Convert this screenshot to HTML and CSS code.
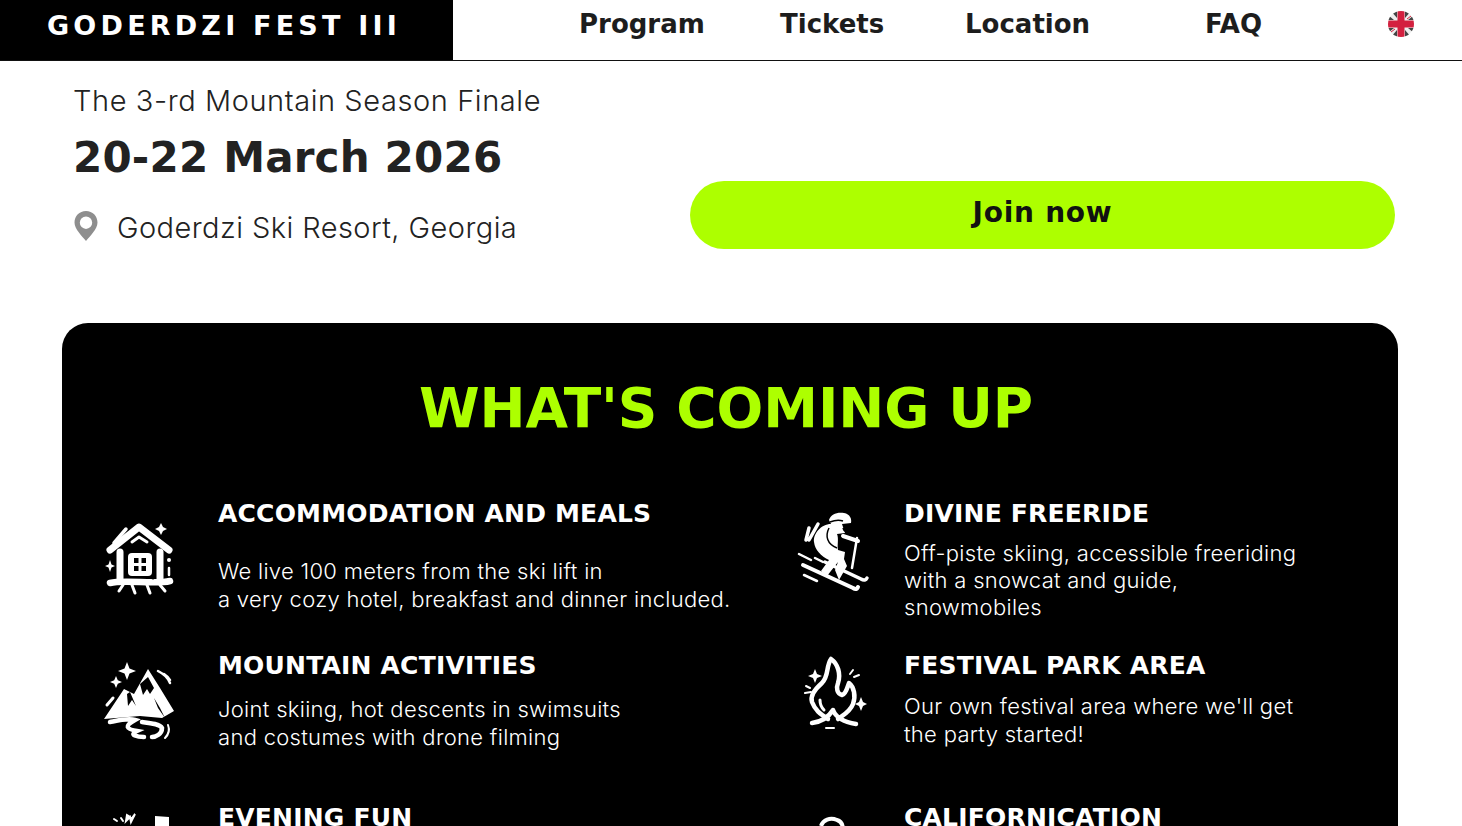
FILE: index.html
```html
<!DOCTYPE html>
<html lang="en">
<head>
<meta charset="utf-8">
<title>Goderdzi Fest III</title>
<link rel="stylesheet" href="styles.css">
</head>
<body>
<div class="page">
<header class="header">
  <a class="logo">GODERDZI FEST III</a>
  <nav class="nav">
    <a class="nav-link">Program</a>
    <a class="nav-link">Tickets</a>
    <a class="nav-link">Location</a>
    <a class="nav-link">FAQ</a>
    <svg class="flag" width="28" height="28" viewBox="0 0 28 28">
      <defs><clipPath id="fc"><circle cx="14" cy="14" r="13"/></clipPath></defs>
      <g clip-path="url(#fc)">
        <rect width="28" height="28" fill="#eee"/>
        <path d="M4 1h6v7zM24 1h-6v7zM4 27h6v-7zM24 27h-6v-7zM1 5l6 5H1zM27 5l-6 5h6zM1 23l6-5H1zM27 23l-6-5h6z" fill="#444"/>
        <path d="M4 22l4-3M20 9l4-3" stroke="#d8223f" stroke-width="1"/>
        <path d="M10.500 0h7v10.500H28v7H17.500V28h-7V17.500H0v-7h10.500z" fill="#d3203f"/>
      </g>
    </svg>
  </nav>
</header>

<section class="hero">
  <div class="hero-info">
    <p class="hero-sub">The 3-rd Mountain Season Finale</p>
    <h1 class="hero-date">20-22 March 2026</h1>
    <div class="hero-place">
      <svg class="pin" width="26" height="32" viewBox="0 0 26 32">
        <path fill-rule="evenodd" d="M13 1C6.400 1 1.500 6 1.500 12.500 1.500 19 9 26 13 31c4-5 11.500-12 11.500-18.500C24.500 6 19.600 1 13 1zm0 5.500a6.200 6.200 0 1 1 0 12.400 6.200 6.200 0 0 1 0-12.400z" fill="#8e8e8e"/>
      </svg>
      <span>Goderdzi Ski Resort, Georgia</span>
    </div>
  </div>
  <a class="join">Join now</a>
</section>

<section class="card">
  <h2 class="card-title">WHAT'S COMING UP</h2>
  <div class="features">

    <article class="feature">
      <svg class="icon" width="100" height="110" viewBox="0 0 100 110">
        <g fill="none" stroke="#fff" stroke-linecap="round" stroke-linejoin="round">
          <path d="M20 50 49 27 79 50" stroke-width="7"/>
          <path d="M42 42 49 37 57 42" stroke-width="3"/>
          <path d="M24 43 36 29" stroke-width="3.500"/>
          <path d="M30 52V80M70 52V80" stroke-width="7"/>
          <path d="M20 83C35 79 65 85 80 81" stroke-width="6.500"/>
          <path d="M29 91 33 85M45 93 42 85M60 93 57 85M75 91 70 85" stroke-width="3"/>
          <path d="M79 68V75" stroke-width="2.500"/>
        </g>
        <rect x="38" y="53" width="24" height="23" rx="4" fill="#fff"/>
        <path d="M44 58h4.500v5H44zM51.500 58H56v5h-4.500zM44 66h4.500v5H44zM51.500 66H56v5h-4.500z" fill="#000"/>
        <path d="M71 23l2 4 4 2-4 2-2 4-2-4-4-2 4-2zM20 60l1.500 4.500 3.500 1.500-3.500 1.500L20 72l-1.500-4.500-3.500-1.500 3.500-1.500z" fill="#fff"/>
        <circle cx="79" cy="60" r="2" fill="#fff"/>
        <circle cx="63" cy="78" r="1.500" fill="#000"/>
      </svg>
      <div class="feature-body">
        <h3 class="feature-title">ACCOMMODATION AND MEALS</h3>
        <p class="feature-text gap-large">We live 100 meters from the ski lift in<br>a very cozy hotel, breakfast and dinner included.</p>
      </div>
    </article>

    <article class="feature">
      <svg class="icon" width="100" height="110" viewBox="-9 0 100 110">
        <path d="M44 20C46 14 52 12 59 13 65 14 67 19 66 23L57 24 60 33 52 34C54 38 52 46 53 50L60 52 59 59 62 66 54 80 50 70 53 62 42 76 36 71 44 60C36 56 30 50 29 42 28 34 36 24 46 24Z" fill="#fff"/>
        <path d="M58 28C59 32 62 33 65 30M44 28C40 36 42 44 52 48M45 22C50 20 55 20 58 21" fill="none" stroke="#000" stroke-width="1.500"/>
        <g fill="none" stroke="#fff" stroke-linecap="round">
          <path d="M58 36 73 41" stroke-width="4"/>
          <path d="M72 38 67 68" stroke-width="2.500"/>
          <path d="M24 28 21 40M33 24 24 40" stroke-width="3.500"/>
          <path d="M18 65 68 88C71 90 72 89 73 87" stroke-width="4"/>
          <path d="M40 62 76 79C79 81 81 80 82 78" stroke-width="3.500"/>
          <path d="M14 54 26 60M30 58 38 62M19 75 32 81" stroke-width="2.500"/>
        </g>
      </svg>
      <div class="feature-body">
        <h3 class="feature-title">DIVINE FREERIDE</h3>
        <p class="feature-text gap-small tight">Off-piste skiing, accessible freeriding<br>with a snowcat and guide,<br>snowmobiles</p>
      </div>
    </article>

    <article class="feature">
      <svg class="icon" width="100" height="100" viewBox="0 2 100 100">
        <path d="M37 12l2.500 6.500 6.500 2.500-6.500 2.500L37 30l-2.500-6.500L28 21l6.500-2.500zM26 26l1.800 4.200L32 32l-4.200 1.800L26 38l-1.800-4.200L20 32l4.200-1.800z" fill="#fff"/>
        <path d="M58 19 70 38 84 61 72 68 50 66 14 69 34 39 44 44Z" fill="#fff"/>
        <path d="M50 34 53 45 57 39 60 44 64 38 58 27ZM37 44 38 56 42 50 46 56 40 42ZM64 48 68 58 75 68 70 58Z" fill="#000"/>
        <g fill="none" stroke="#fff" stroke-linecap="round">
          <path d="M68 21C74 24 78 28 80 33M74 24C77 26 79 28 80 30" stroke-width="2.500"/>
          <path d="M17 55 23 48" stroke-width="3"/>
          <path d="M20 72C30 70 38 68 45 70 34 76 36 79 47 81 38 85 48 87 54 87M52 72C60 73 70 74 72 78 72 84 66 87 62 87" stroke-width="4.500"/>
          <path d="M78 75C80 80 78 85 75 88" stroke-width="2"/>
        </g>
      </svg>
      <div class="feature-body">
        <h3 class="feature-title">MOUNTAIN ACTIVITIES</h3>
        <p class="feature-text gap-mid">Joint skiing, hot descents in swimsuits<br>and costumes with drone filming</p>
      </div>
    </article>

    <article class="feature">
      <svg class="icon" width="100" height="100" viewBox="-14 2 100 100">
        <g fill="none" stroke="#fff" stroke-linecap="round" stroke-linejoin="round">
          <path d="M38 69C30 64 25 60 22 52 20 46 24 40 32 33 39 26 36 16 41 9 48 14 51 24 48 33 46 38 47 44 52 45 56 44 57 38 59 33 64 37 66 46 63 54 60 62 52 66 48 69" stroke-width="4.500"/>
          <path d="M30 50C30 54 32 58 34 60" stroke-width="3"/>
          <path d="M22 73C30 72 38 68 43 60 46 68 54 72 66 74" stroke-width="4.500"/>
          <path d="M36 78H44" stroke-width="2"/>
          <path d="M60 24 63 20M64 27 69 25M16 36 20 38M15 43 21 42" stroke-width="2"/>
        </g>
        <path d="M25 19l2 5 5 2-5 2-2 5-2-5-5-2 5-2zM71 47l2 5 4 2-4 2-2 5-2-5-4-2 4-2z" fill="#fff"/>
      </svg>
      <div class="feature-body">
        <h3 class="feature-title">FESTIVAL PARK AREA</h3>
        <p class="feature-text gap-small">Our own festival area where we'll get<br>the party started!</p>
      </div>
    </article>

    <article class="feature">
      <svg class="icon" width="100" height="60" viewBox="0 14 100 60">
        <path d="M24 29l3 2M31 28l2 3M37 25l-1 6 4-4 1 5 4-8-3 4z" fill="#fff" stroke="#fff" stroke-width="2" stroke-linecap="round"/>
        <path d="M65 26 79 27V40H65Z" fill="#fff"/>
      </svg>
      <div class="feature-body">
        <h3 class="feature-title">EVENING FUN</h3>
      </div>
    </article>

    <article class="feature">
      <svg class="icon" width="100" height="60" viewBox="-9 14 100 60">
        <path d="M36 36C38 30 45 27 52 30 56 31 58 35 58 40" fill="none" stroke="#fff" stroke-width="4"/>
      </svg>
      <div class="feature-body">
        <h3 class="feature-title">CALIFORNICATION</h3>
      </div>
    </article>

  </div>
</section>
</div>
</body>
</html>
```

FILE: styles.css
```css
* { box-sizing: border-box; }
html, body { margin: 0; padding: 0; background: #fff; }
body { font-family: Inter, "Liberation Sans", sans-serif; color: #222; }
h1, h2, h3, p { margin: 0; }

.page { height: 826px; overflow: hidden; }

.header { display: flex; height: 61px; border-bottom: 1px solid #111; }
.logo {
  width: 453px; height: 60px; padding-left: 47px; background: #000; color: #fff;
  font-family: "DejaVu Sans", sans-serif; font-size: 27px; font-weight: 700; line-height: 52px; letter-spacing: 4.200px; white-space: nowrap;
}
.nav {
  flex: 1; padding-left: 126px;
  display: grid; grid-template-columns: 201px 185px 240px 183px 28px; align-items: center; height: 48px;
}
.nav-link { font-family: "DejaVu Sans", sans-serif; font-size: 26px; font-weight: 700; color: #1d1d1d; }
.flag { display: block; margin-left: -1px; }

.hero { display: flex; justify-content: space-between; align-items: flex-end; height: 188px; padding: 22px 67px 0 73px; }
.hero-info { align-self: flex-start; }
.hero-sub { font-size: 29px; font-weight: 300; line-height: 36px; letter-spacing: 0.580px; }
.hero-date { font-family: "DejaVu Sans", sans-serif; font-size: 42px; font-weight: 700; line-height: 56px; margin-top: 11px; letter-spacing: 0.200px; }
.hero-place { display: flex; align-items: center; gap: 18px; margin-top: 24px; font-size: 29px; font-weight: 300; line-height: 36px; letter-spacing: 0.430px; }
.pin { display: block; flex: none; margin-top: -4px; }
.join {
  width: 705px; height: 68px; border-radius: 34px; background: #adff00; color: #111;
  font-family: "DejaVu Sans", sans-serif; font-size: 28px; font-weight: 700; line-height: 64px; text-align: center; letter-spacing: 0.750px;
}

.card {
  margin: 74px 64px 0 62px; height: 620px; background: #000; border-radius: 26px;
  padding: 52px 0 0 28px; color: #fff;
}
.card-title {
  color: #adff00; font-family: "DejaVu Sans", sans-serif; font-size: 55px; font-weight: 700; line-height: 66px;
  text-align: center; margin-left: -36px; letter-spacing: -0.100px;
}
.features { display: grid; grid-template-columns: 686px 1fr; grid-auto-rows: 152px; margin-top: 59px; }
.feature { display: grid; grid-template-columns: 128px 1fr; align-items: start; }
.icon { display: block; }
.feature-title { font-family: "DejaVu Sans", sans-serif; font-size: 25px; font-weight: 700; line-height: 28px; letter-spacing: 0.200px; }
.feature-text { font-size: 22px; font-weight: 300; line-height: 28px; letter-spacing: 0.300px; }
.feature-text.tight { line-height: 27px; }
.gap-large { margin-top: 29px; }
.gap-mid { margin-top: 15px; }
.gap-small { margin-top: 12px; }
```
